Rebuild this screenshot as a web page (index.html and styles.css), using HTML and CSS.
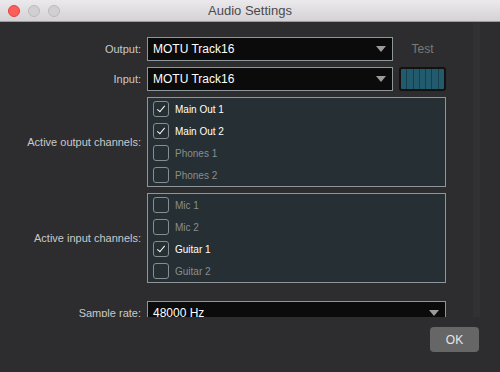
FILE: index.html
```html
<!DOCTYPE html>
<html lang="en">
<head>
    <meta charset="UTF-8">
    <title>Audio Settings</title>
    <link rel="stylesheet" href="styles.css">
</head>
<body>
    <div class="window">
        <div class="titlebar">
            <div class="lights">
                <span class="light close"></span>
                <span class="light"></span>
                <span class="light"></span>
            </div>
            <div class="title">Audio Settings</div>
        </div>

        <div class="scroll-area">
            <div class="form">
                <label class="label">Output:</label>
                <div class="select">MOTU Track16<span class="arrow"></span></div>
                <div class="test">Test</div>

                <label class="label">Input:</label>
                <div class="select">MOTU Track16<span class="arrow"></span></div>
                <div class="meter">
                    <span></span><span></span><span></span><span></span><span></span><span></span><span></span>
                </div>

                <label class="label">Active output channels:</label>
                <div class="channel-list">
                    <div class="channel checked"><span class="box"></span>Main Out 1</div>
                    <div class="channel checked"><span class="box"></span>Main Out 2</div>
                    <div class="channel"><span class="box"></span>Phones 1</div>
                    <div class="channel"><span class="box"></span>Phones 2</div>
                </div>

                <label class="label">Active input channels:</label>
                <div class="channel-list">
                    <div class="channel"><span class="box"></span>Mic 1</div>
                    <div class="channel"><span class="box"></span>Mic 2</div>
                    <div class="channel checked"><span class="box"></span>Guitar 1</div>
                    <div class="channel"><span class="box"></span>Guitar 2</div>
                </div>

                <label class="label rate-label">Sample rate:</label>
                <div class="select wide rate-select">48000 Hz<span class="arrow"></span></div>
            </div>
            <div class="track"></div>
        </div>

        <div class="footer">
            <button class="button">OK</button>
        </div>
    </div>
</body>
</html>
```

FILE: styles.css
```css
* {
    box-sizing: border-box;
}
body {
    margin: 0;
    width: 500px;
    height: 372px;
    overflow: hidden;
    font-family: "Liberation Sans", Arial, sans-serif;
    background-color: #2d2d2f;
}
.window {
    display: flex;
    flex-direction: column;
    height: 372px;
}
.titlebar {
    position: relative;
    height: 22px;
    background: linear-gradient(#ebe9eb, #d4d2d4);
    border-bottom: 1px solid #9c9a9c;
    display: flex;
    align-items: center;
    justify-content: center;
}
.lights {
    position: absolute;
    left: 8px;
    top: 5px;
    display: flex;
    gap: 8px;
}
.light {
    width: 12px;
    height: 12px;
    border-radius: 50%;
    background-color: #d1cfd1;
    border: 1px solid #bcbabc;
}
.light.close {
    background-color: #fc5f5a;
    border-color: #e0443f;
}
.title {
    font-size: 13px;
    color: #4b4a4b;
}
.scroll-area {
    height: 295px;
    overflow: hidden;
    display: flex;
}
.form {
    flex: 1;
    display: grid;
    grid-template-columns: 141px 246px 47px;
    grid-auto-rows: min-content;
    column-gap: 6px;
    row-gap: 6px;
    padding-top: 15px;
    align-items: center;
}
.track {
    width: 7px;
    margin-right: 20px;
    background-color: #313133;
}
.label {
    font-size: 11px;
    color: #c9c9c9;
    text-align: right;
}
.select {
    position: relative;
    height: 24px;
    background-color: #0b0b0b;
    border: 1px solid #8d9698;
    color: #fff;
    font-size: 12px;
    line-height: 22px;
    padding-left: 5px;
}
.select.wide {
    grid-column: 2 / 4;
}
.arrow {
    position: absolute;
    right: 6px;
    top: 8px;
    width: 0;
    height: 0;
    border-left: 5px solid transparent;
    border-right: 5px solid transparent;
    border-top: 6px solid #9b9b9b;
}
.test {
    font-size: 12px;
    color: #7a7a7a;
    text-align: center;
}
.meter {
    height: 24px;
    display: flex;
    border: 2px solid #121212;
    border-radius: 3px;
    background-color: #121212;
    overflow: hidden;
}
.meter span {
    flex: 1;
    background-color: #215b6d;
    border-left: 1px solid #163f4d;
}
.meter span:first-child {
    border-left: none;
}
.channel-list {
    grid-column: 2 / 4;
    height: 90px;
    background-color: #252f34;
    border: 1px solid #8d9698;
    padding: 0 0 0 5px;
}
.channel {
    height: 22px;
    display: flex;
    align-items: center;
    gap: 6px;
    font-size: 10px;
    color: #8a8d8f;
}
.channel.checked {
    color: #fff;
}
.box {
    position: relative;
    width: 16px;
    height: 16px;
    border: 1px solid #878d90;
    border-radius: 3px;
}
.channel.checked .box::after {
    content: "";
    position: absolute;
    left: 5px;
    top: 2px;
    width: 3px;
    height: 7px;
    border-right: 1.5px solid #fff;
    border-bottom: 1.5px solid #fff;
    transform: rotate(40deg);
}
.rate-label,
.rate-select {
    margin-top: 12px;
}
.footer {
    flex: 1;
    display: flex;
    justify-content: flex-end;
    align-items: flex-start;
    padding: 10px 21px 0 0;
}
.button {
    width: 49px;
    height: 25px;
    border: none;
    border-radius: 4px;
    background-color: #666;
    color: #e6e6e6;
    font-family: "Liberation Sans", Arial, sans-serif;
    font-size: 12px;
}
```
